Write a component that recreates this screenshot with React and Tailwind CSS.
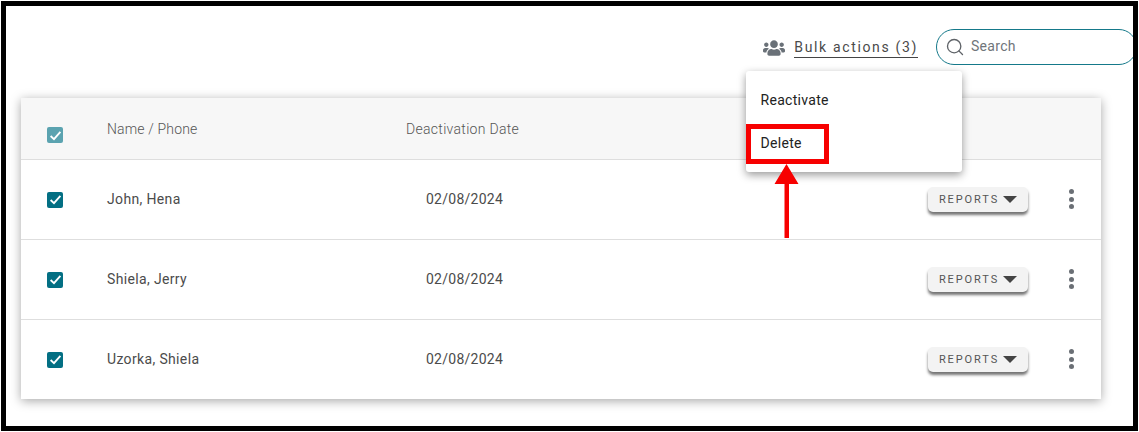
import { Search } from 'lucide-react';
import { FaUsers } from 'react-icons/fa';

const rows = [
  { name: 'John, Hena', date: '02/08/2024' },
  { name: 'Shiela, Jerry', date: '02/08/2024' },
  { name: 'Uzorka, Shiela', date: '02/08/2024' },
];

function CheckBox({ faded }) {
  return (
    <span className={`flex h-4 w-4 items-center justify-center rounded-[2px] ${faded ? 'bg-[#5ba3b0]' : 'bg-[#036f83]'}`}>
      <svg width="13" height="13" viewBox="0 0 12 12" fill="none" stroke="white" strokeWidth="1.7">
        <path d="M1.5 6.5 L4.6 9.4 L10.5 2.6" />
      </svg>
    </span>
  );
}

function Row({ row }) {
  return (
    <div className="flex h-20 items-center border-t border-[#dedede] bg-white">
      <div className="ml-[26px] w-[60px]">
        <CheckBox />
      </div>
      <div className="mb-[1px] w-[319px] text-[14px] tracking-[0.35px] text-[#4b4b4b]">{row.name}</div>
      <div className="w-[502px] text-[14px] tracking-[0.25px] text-[#4b4b4b]">{row.date}</div>
      <button className="mb-[1px] flex h-[25px] w-[100px] items-center justify-center gap-[4px] rounded-[5px] bg-[#f3f3f3] text-[11px] tracking-[1.9px] text-[#555] shadow-[0_3px_3px_rgba(0,0,0,0.55)]">
        <span className="pt-[2px]">REPORTS</span>
        <svg width="14" height="7" viewBox="0 0 14 7" fill="#444">
          <path d="M0 0 H14 L7 7 Z" />
        </svg>
      </button>
      <div className="mb-[1px] ml-[41px] flex flex-col gap-[2.5px]">
        <span className="h-[5px] w-[5px] rounded-full bg-[#6a6f75]" />
        <span className="h-[5px] w-[5px] rounded-full bg-[#6a6f75]" />
        <span className="h-[5px] w-[5px] rounded-full bg-[#6a6f75]" />
      </div>
    </div>
  );
}

export default function App() {
  return (
    <div className="relative h-[432px] w-[1139px] overflow-hidden border border-white">
      <div className="h-[430px] w-[1137px] overflow-hidden border-[5px] border-black bg-white font-['Roboto',sans-serif]">
        <div className="flex h-[92px] items-start justify-end pt-[23px]">
          <div className="mt-[8px] flex items-center">
            <FaUsers className="text-[#6a7178]" size={22} />
            <span className="ml-[9px] border-b border-[#444] pb-[1px] text-[14px] leading-[18px] tracking-[1.65px] text-[#4a4a4a]">Bulk actions (3)</span>
          </div>
          <div className="-mr-[4px] ml-[18px] flex h-[36px] w-[201px] items-center rounded-[18px] border border-[#15798a] pl-[8px]">
            <Search size={20} strokeWidth={1.6} className="text-[#5f6368]" />
            <span className="ml-[6px] mb-[2px] text-[14px] tracking-[0.3px] text-[#70757a]">Search</span>
          </div>
        </div>

        <div className="ml-[15px] w-[1080px] shadow-[0_2px_10px_rgba(0,0,0,0.35)]">
          <div className="flex h-[61px] items-center bg-[#f7f7f7]">
            <div className="ml-[26px] mt-[13px] w-[60px]">
              <CheckBox faded />
            </div>
            <div className="w-[299px] pt-[2px] text-[14px] font-light tracking-[0.15px] text-[#555]">Name / Phone</div>
            <div className="pt-[2px] text-[14px] font-light tracking-[0.3px] text-[#555]">Deactivation Date</div>
          </div>
          {rows.map((row) => (
            <Row key={row.name} row={row} />
          ))}
        </div>
      </div>

      {/* menu sits over the table */}
      <div className="absolute left-[745px] top-[70px] h-[101px] w-[216px] rounded-[3px] bg-white font-['Roboto',sans-serif] text-[14px] tracking-[0.3px] text-[#222] shadow-[0_3px_8px_rgba(0,0,0,0.4)]">
        <div className="pl-[14.5px] pt-[19px] leading-[20px]">Reactivate</div>
        <div className="pl-[14.5px] pt-[23px] leading-[20px]">Delete</div>
      </div>

      {/* red callout */}
      <div className="absolute left-[745px] top-[123px] h-[40px] w-[83px] border-[5px] border-[#f70000]" />
      <svg className="absolute left-[771px] top-[163px]" width="30" height="75" viewBox="0 0 30 75" fill="#f70000">
        <path d="M2.5 20 L14.5 0 L26.5 20 H17 V74 H12.5 V20 Z" />
      </svg>
    </div>
  );
}
